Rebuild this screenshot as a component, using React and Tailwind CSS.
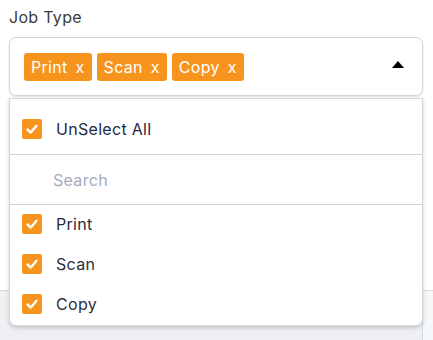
import React from "react";

function Check() {
  return (
    <span className="flex h-5 w-5 items-center justify-center rounded-[2px] bg-[#f7941d]">
      <svg width="14" height="14" viewBox="0 0 14 14" fill="none">
        <polyline points="2.5,7.5 5.8,10.5 11.5,3.8" stroke="white" strokeWidth="2.4" strokeLinecap="round" strokeLinejoin="round" />
      </svg>
    </span>
  );
}

function Chip({ label }) {
  return (
    <span className="flex h-7 items-center gap-[8px] rounded-[3px] bg-[#f7941d] px-[7px] text-[16px] leading-none text-white">
      <span>{label}</span>
      <span>x</span>
    </span>
  );
}

export default function App() {
  const items = ["Print", "Scan", "Copy"];
  return (
    <div
      className="relative h-[340px] w-[433px] overflow-hidden bg-white tracking-[0.3px]"
      style={{ fontFamily: "Inter, 'Noto Sans', sans-serif" }}
    >
      <div className="flex h-[290px] flex-col px-[9px] pt-[7px]">
        <div className="text-[16px] leading-[20px] text-[#3b3b3b]">Job Type</div>
        <div className="mt-[10px] flex h-[59px] w-[414px] items-center justify-between rounded-[7px] border border-[#cdd5df] pl-[14px] pr-[18px] shadow-[0_1px_2px_rgba(0,0,0,0.12)]">
          <div className="flex gap-[5px]">
            <Chip label="Print" />
            <Chip label="Scan" />
            <Chip label="Copy" />
          </div>
          <svg width="12" height="7" viewBox="0 0 12 7" className="mb-[5px]">
            <polygon points="6,0 12,7 0,7" fill="#000" />
          </svg>
        </div>
      </div>
      <div className="h-[50px] border-t border-[#d6d9de] bg-[#eef0f3]">
        <div className="ml-[422px] h-full border-l border-[#cfdbe8] bg-[#f6f7f8]" />
      </div>

      <div className="absolute left-[9px] top-[98px] w-[414px] rounded-b-[7px] border border-[#d7d7d7] bg-white shadow-[0_2px_4px_rgba(0,0,0,0.18)]">
        <div className="flex items-center gap-[14px] pb-[15px] pl-[12px] pt-[20px]">
          <Check />
          <span className="text-[16px] leading-5 text-[#1f2a44]">UnSelect All</span>
        </div>
        <div className="h-px bg-[#d3d3d3]" />
        <div className="flex h-[49px] items-center pl-[43px] text-[16px] text-[#a3acbf]">Search</div>
        <div className="h-px bg-[#d3d3d3]" />
        <div className="flex flex-col gap-[20px] pb-[11px] pl-[12px] pt-[9px]">
          {items.map((t) => (
            <div key={t} className="flex items-center gap-[14px]">
              <Check />
              <span className="text-[16px] leading-5 text-[#2a2f3a]">{t}</span>
            </div>
          ))}
        </div>
      </div>
    </div>
  );
}
